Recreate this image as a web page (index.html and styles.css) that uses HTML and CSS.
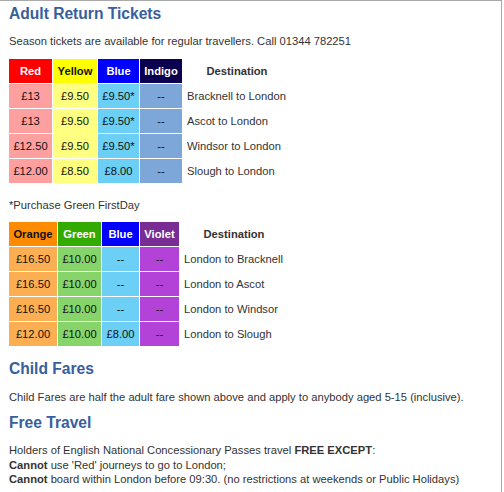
FILE: index.html
```html
<!DOCTYPE html>
<html lang="en">
<head>
    <meta charset="UTF-8">
    <meta name="viewport" content="width=device-width, initial-scale=1.0">
    <title>Fares</title>
    <link rel="stylesheet" href="styles.css">
</head>
<body>
    <div class="page">
        <h2 class="title first">Adult Return Tickets</h2>
        <p class="intro">Season tickets are available for regular travellers. Call 01344 782251</p>

        <table class="fares fares-out">
            <tr>
                <th class="red">Red</th>
                <th class="yellow">Yellow</th>
                <th class="blue">Blue</th>
                <th class="indigo">Indigo</th>
                <th class="dest-head">Destination</th>
            </tr>
            <tr>
                <td class="red">£13</td>
                <td class="yellow">£9.50</td>
                <td class="blue">£9.50*</td>
                <td class="indigo">--</td>
                <td class="dest">Bracknell to London</td>
            </tr>
            <tr>
                <td class="red">£13</td>
                <td class="yellow">£9.50</td>
                <td class="blue">£9.50*</td>
                <td class="indigo">--</td>
                <td class="dest">Ascot to London</td>
            </tr>
            <tr>
                <td class="red">£12.50</td>
                <td class="yellow">£9.50</td>
                <td class="blue">£9.50*</td>
                <td class="indigo">--</td>
                <td class="dest">Windsor to London</td>
            </tr>
            <tr>
                <td class="red">£12.00</td>
                <td class="yellow">£8.50</td>
                <td class="blue">£8.00</td>
                <td class="indigo">--</td>
                <td class="dest">Slough to London</td>
            </tr>
        </table>

        <p class="note">*Purchase Green FirstDay</p>

        <table class="fares fares-back">
            <tr>
                <th class="orange">Orange</th>
                <th class="green">Green</th>
                <th class="blue">Blue</th>
                <th class="violet">Violet</th>
                <th class="dest-head">Destination</th>
            </tr>
            <tr>
                <td class="orange">£16.50</td>
                <td class="green">£10.00</td>
                <td class="blue">--</td>
                <td class="violet">--</td>
                <td class="dest">London to Bracknell</td>
            </tr>
            <tr>
                <td class="orange">£16.50</td>
                <td class="green">£10.00</td>
                <td class="blue">--</td>
                <td class="violet">--</td>
                <td class="dest">London to Ascot</td>
            </tr>
            <tr>
                <td class="orange">£16.50</td>
                <td class="green">£10.00</td>
                <td class="blue">--</td>
                <td class="violet">--</td>
                <td class="dest">London to Windsor</td>
            </tr>
            <tr>
                <td class="orange">£12.00</td>
                <td class="green">£10.00</td>
                <td class="blue">£8.00</td>
                <td class="violet">--</td>
                <td class="dest">London to Slough</td>
            </tr>
        </table>

        <h2 class="title child">Child Fares</h2>
        <p class="child-text">Child Fares are half the adult fare shown above and apply to anybody aged 5-15 (inclusive).</p>

        <h2 class="title free">Free Travel</h2>
        <p class="free-text">
            Holders of English National Concessionary Passes travel <b>FREE EXCEPT</b>:<br>
            <b>Cannot</b> use 'Red' journeys to go to London;<br>
            <b>Cannot</b> board within London before 09:30. (no restrictions at weekends or Public Holidays)
        </p>
    </div>
</body>
</html>
```

FILE: styles.css
```css
body {
    margin: 0;
    padding: 0;
    background-color: #fff;
    font-family: "Liberation Sans", Arial, sans-serif;
    font-size: 11.2px;
    color: #333;
}

.page {
    width: 492px;
    height: 491px;
    padding-left: 9px;
    border-top: 1px solid #a9a9a9;
    border-right: 1px solid #a9a9a9;
}

.title {
    margin: 0;
    font-size: 15.6px;
    line-height: 18px;
    font-weight: bold;
    color: #36609d;
}

p {
    margin: 0;
    line-height: 15px;
}

.first {
    padding-top: 4px;
}

.intro {
    margin-top: 11px;
}

.note {
    margin-top: 14px;
}

.child {
    margin-top: 13px;
}

.child-text {
    margin-top: 12px;
}

.free {
    margin-top: 9px;
}

.free-text {
    margin-top: 11px;
    line-height: 14.7px;
}

/* fare tables */
.fares {
    border-collapse: separate;
    border-spacing: 1px;
    margin-left: -1px;
    font-size: 11.2px;
}

.fares-out {
    margin-top: 9px;
}

.fares-back {
    margin-top: 8px;
}

.fares th,
.fares td {
    height: 24px;
    padding: 0;
    text-align: center;
    color: #111;
}

.fares th {
    font-weight: bold;
    color: #fff;
}

.fares .dest-head {
    width: 108px;
    color: #333;
}

.fares .dest {
    text-align: left;
    padding-left: 4px;
    color: #333;
}

th.red { background-color: #ff0000; }
td.red { background-color: #ffa0a0; }
th.yellow { background-color: #ffff00; color: #111; }
td.yellow { background-color: #ffff80; }
th.blue { background-color: #0000ff; }
td.blue { background-color: #6ccff6; }
th.indigo { background-color: #0b0050; }
td.indigo { background-color: #7da7d8; }
th.orange { background-color: #ff8c00; color: #111; }
td.orange { background-color: #fbaf52; }
th.green { background-color: #33aa00; }
td.green { background-color: #87d46b; }
th.violet { background-color: #792d94; }
td.violet { background-color: #b343d8; }

.fares-out .red { width: 43px; }
.fares-out .yellow { width: 44px; }
.fares-out .blue { width: 41px; }
.fares-out .indigo { width: 42px; }

.fares-back .orange { width: 48px; }
.fares-back .green { width: 43px; }
.fares-back .blue { width: 37px; }
.fares-back .violet { width: 39px; }
```
